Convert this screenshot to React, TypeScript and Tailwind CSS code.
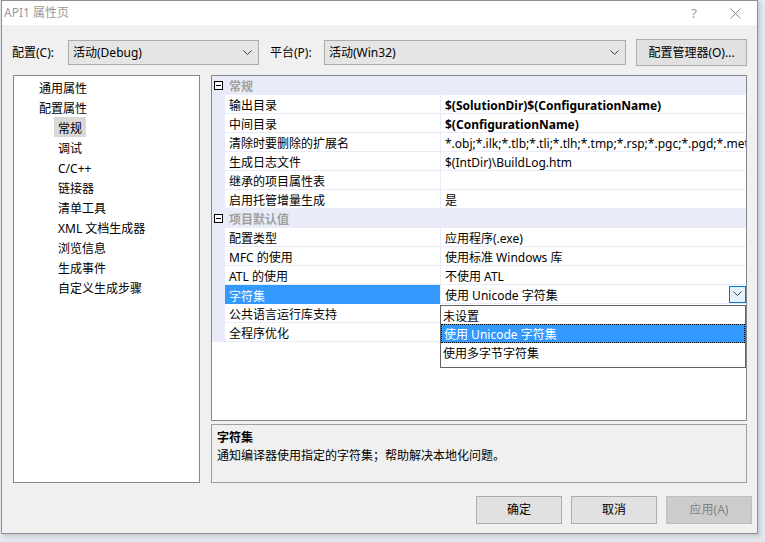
import React from 'react';

type Row =
  | { kind: 'cat'; name: string }
  | { kind: 'prop'; name: string; value?: string; bold?: boolean; selected?: boolean };

const rows: Row[] = [
  { kind: 'cat', name: '常规' },
  { kind: 'prop', name: '输出目录', value: '$(SolutionDir)$(ConfigurationName)', bold: true },
  { kind: 'prop', name: '中间目录', value: '$(ConfigurationName)', bold: true },
  {
    kind: 'prop',
    name: '清除时要删除的扩展名',
    value: '*.obj;*.ilk;*.tlb;*.tli;*.tlh;*.tmp;*.rsp;*.pgc;*.pgd;*.meta;$(TargetPath)',
  },
  { kind: 'prop', name: '生成日志文件', value: '$(IntDir)\\BuildLog.htm' },
  { kind: 'prop', name: '继承的项目属性表', value: '' },
  { kind: 'prop', name: '启用托管增量生成', value: '是' },
  { kind: 'cat', name: '项目默认值' },
  { kind: 'prop', name: '配置类型', value: '应用程序(.exe)' },
  { kind: 'prop', name: 'MFC 的使用', value: '使用标准 Windows 库' },
  { kind: 'prop', name: 'ATL 的使用', value: '不使用 ATL' },
  { kind: 'prop', name: '字符集', value: '使用 Unicode 字符集', selected: true },
  { kind: 'prop', name: '公共语言运行库支持', value: '' },
  { kind: 'prop', name: '全程序优化', value: '' },
];

const treeTop = ['通用属性', '配置属性'];
const treeSub = ['常规', '调试', 'C/C++', '链接器', '清单工具', 'XML 文档生成器', '浏览信息', '生成事件', '自定义生成步骤'];

// 콤보 박스의 작은 화살표
const Chevron = ({ className = '' }: { className?: string }) => (
  <svg width="9" height="6" viewBox="0 0 9 6" className={className}>
    <path d="M0.5 0.5 L4.5 4.5 L8.5 0.5" fill="none" stroke="#3c3c3c" strokeWidth="1" />
  </svg>
);

const Combo = ({ value, width }: { value: string; width: string }) => (
  <div className={`${width} h-[25px] bg-[#e5e5e5] border border-[#acacac] flex items-center pl-[4px] pr-[6px]`}>
    <span className="flex-1 truncate">{value}</span>
    <Chevron />
  </div>
);

const MinusBox = () => (
  <div className="w-[9px] h-[9px] border border-black flex items-center justify-center bg-white">
    <div className="w-[5px] h-px bg-black" />
  </div>
);

const App: React.FC = () => {
  return (
    <div className="w-[765px] h-[542px] bg-[#e3e7ee] overflow-hidden font-['Noto_Sans','Noto_Sans_CJK_SC',sans-serif] text-[12px] text-black">
      <div className="ml-px w-[757px] h-[534px] border border-[#8f8f8f] bg-[#f0f0f0] flex flex-col shadow-[2px_2px_4px_rgba(0,0,0,0.15)]">
        {/* 제목 표시줄 */}
        <div className="h-[24px] bg-white flex items-center pl-[2px] text-[#9a9a9a] text-[12px] leading-[16px]">
          <span className="flex-1">API1 属性页</span>
          <span className="w-[30px] text-center text-[13px] mr-[16px]">?</span>
          <div className="w-[20px] mr-[12px] flex justify-center">
            <svg width="11" height="11" viewBox="0 0 11 11">
              <path d="M0.5 0.5 L10.5 10.5 M10.5 0.5 L0.5 10.5" stroke="#8a8a8a" strokeWidth="1" />
            </svg>
          </div>
        </div>

        {/* 구성 / 플랫폼 */}
        <div className="mt-[14px] h-[27px] flex items-center pl-[10px] leading-[16px]">
          <span className="w-[56px]">配置(C):</span>
          <Combo value="活动(Debug)" width="w-[191px]" />
          <span className="ml-[11px] w-[54px]">平台(P):</span>
          <Combo value="活动(Win32)" width="w-[302px]" />
          <div className="ml-[10px] w-[111px] h-[27px] bg-[#e1e1e1] border border-[#adadad] flex items-center justify-center">
            配置管理器(O)...
          </div>
        </div>

        {/* 본문 */}
        <div className="mt-[9px] h-[408px] flex pl-[11px] leading-[16px]">
          {/* 트리 */}
          <div className="w-[187px] h-full bg-white border border-[#828790] pt-[1px]">
            {treeTop.map((t, i) => (
              <React.Fragment key={t}>
                <div className="h-[20px] flex items-center pt-[4px] pl-[25px]">{t}</div>
                {i === 1 &&
                  treeSub.map((s) => (
                    <div key={s} className="h-[20px] flex pl-[40px]">
                      <span
                        className={`px-[4px] h-[20px] pt-[4px] flex items-center ${s === '常规' ? 'bg-[#d9d9d9]' : ''}`}
                      >
                        {s}
                      </span>
                    </div>
                  ))}
              </React.Fragment>
            ))}
          </div>

          {/* 속성 그리드 */}
          <div className="ml-[11px] w-[536px] h-full flex flex-col gap-[3px]">
            <div className="relative h-[346px] bg-white border border-[#828790]">
              {rows.map((r) =>
                r.kind === 'cat' ? (
                  <div key={r.name} className="h-[19px] bg-[#e9ecf8] flex items-center">
                    <div className="w-[13px] pl-[2px] flex items-center">
                      <MinusBox />
                    </div>
                    <span className="pl-[4px] pt-[3px] font-bold text-[#a0a0a0]">{r.name}</span>
                  </div>
                ) : (
                  <div key={r.name} className="h-[19px] flex">
                    <div className="w-[13px] bg-[#e9ecf8]" />
                    <div
                      className={`w-[216px] pl-[4px] pt-[4px] flex items-center border-r border-[#e9ecf8] ${
                        r.selected ? 'bg-[#3399ff] text-white' : 'border-b'
                      }`}
                    >
                      {r.name}
                    </div>
                    <div className="flex-1 min-w-0 pl-[4px] flex items-center border-b border-[#e9ecf8] overflow-hidden">
                      <span className={`flex-1 pt-[4px] whitespace-nowrap overflow-hidden ${r.bold ? 'font-bold' : ''}`}>
                        {r.value}
                      </span>
                      {r.selected && (
                        <div className="w-[17px] h-[17px] bg-[#e5f1fb] border border-[#0078d7] flex items-center justify-center">
                          <Chevron />
                        </div>
                      )}
                    </div>
                  </div>
                )
              )}

              {/* 드롭다운 목록 */}
              <div className="absolute left-[228px] top-[229px] w-[306px] h-[63px] bg-white border border-[#646464]">
                <div className="h-[18px] flex items-center pt-[3px] pl-[2px]">未设置</div>
                <div className="h-[19px] flex items-center pt-[2px] pl-[2px] bg-[#3399ff] text-white border border-dotted border-black">
                  使用 Unicode 字符集
                </div>
                <div className="h-[19px] flex items-center pt-[3px] pl-[2px]">使用多字节字符集</div>
              </div>
            </div>

            {/* 설명 */}
            <div className="h-[59px] bg-[#f0f0f0] border border-[#a0a0a0] px-[5px] pt-[4px] leading-[18px]">
              <div className="font-bold">字符集</div>
              <div>通知编译器使用指定的字符集；帮助解决本地化问题。</div>
            </div>
          </div>
        </div>

        {/* 버튼 */}
        <div className="mt-[13px] flex justify-end pr-[5px] gap-[9px] leading-[16px]">
          <div className="w-[86px] h-[28px] bg-[#e1e1e1] border border-[#adadad] flex items-center justify-center">确定</div>
          <div className="w-[86px] h-[28px] bg-[#e1e1e1] border border-[#adadad] flex items-center justify-center">取消</div>
          <div className="w-[86px] h-[28px] bg-[#cccccc] border border-[#bfbfbf] flex items-center justify-center text-[#838383]">
            应用(A)
          </div>
        </div>
      </div>
    </div>
  );
};

export default App;
